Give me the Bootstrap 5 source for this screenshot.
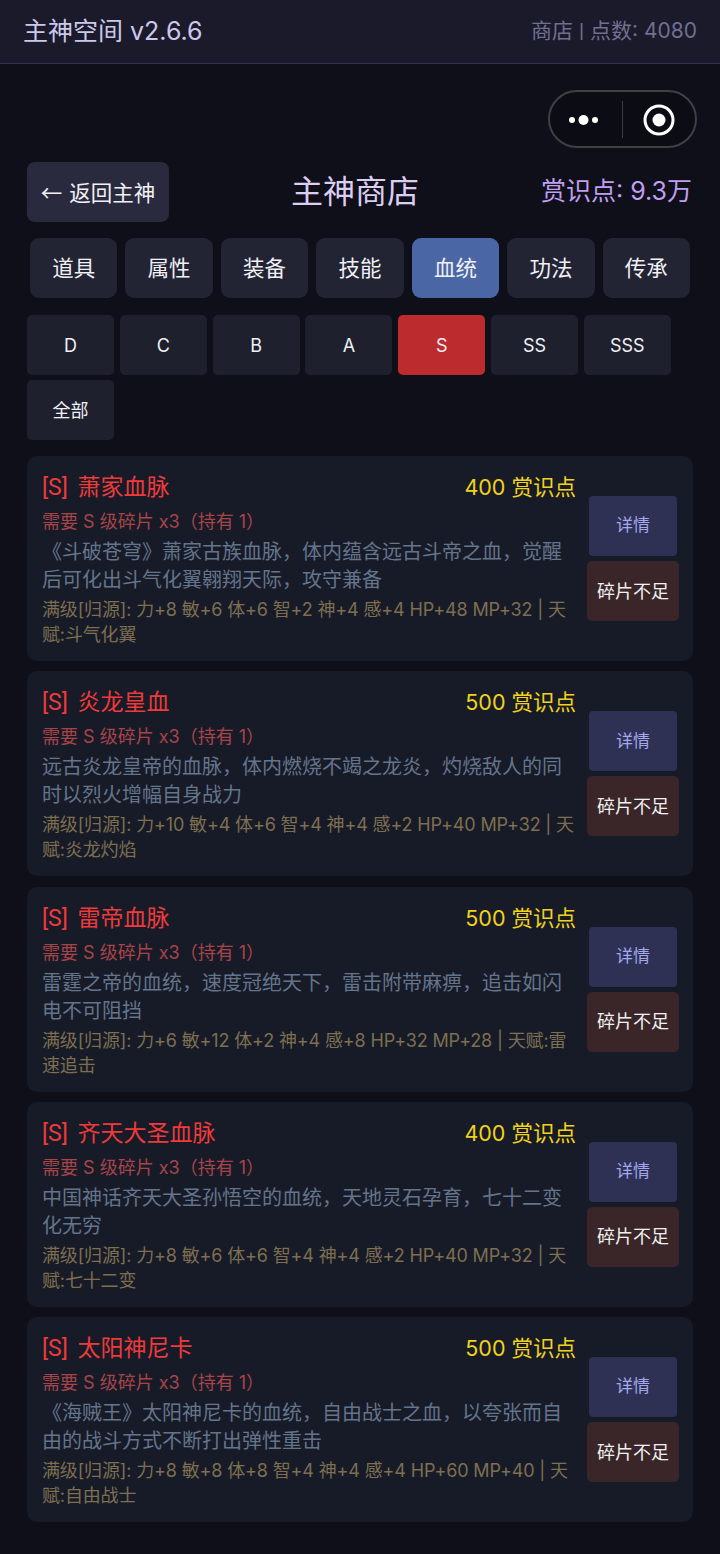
<!DOCTYPE html>
<html lang="zh-CN">
  <head>
    <meta charset="UTF-8" />
    <meta name="viewport" content="width=device-width, initial-scale=1.0" />
    <title>主神商店</title>
    <link href="https://cdn.jsdelivr.net/npm/bootstrap@5.3.0/dist/css/bootstrap.min.css" rel="stylesheet" />
    <style>
      body {
        background-color: #0f0f1a;
        font-family: "Inter", "Noto Sans CJK SC", sans-serif;
        min-height: 1554px;
        overflow: hidden;
      }
      .top-strip {
        height: 64px;
        background-color: #1a1a2a;
        border-bottom: 1px solid #33334f;
        padding: 0 23px;
      }
      .top-name { color: #ccc8ec; font-size: 25px; }
      .top-info { color: #6f6f8f; font-size: 21px; }
      .thin-bar { font-family: "Roboto", sans-serif; }
      .capsule {
        position: absolute;
        top: 90px;
        left: 548px;
        width: 149px;
        height: 58px;
        border: 2px solid #3f3f44;
        border-radius: 29px;
        background-color: #0c0c14;
      }
      .capsule-line { position: absolute; left: 72px; top: 9px; width: 1px; height: 37px; background: #3c3c42; }
      .capsule svg { position: absolute; }
      .shop-wrap { padding: 98px 27px 0; }
      .shop-head { height: 60px; }
      .back-btn {
        width: 142px;
        height: 60px;
        background-color: #2a2a3e;
        color: #f0f0f5;
        border: 0;
        border-radius: 8px;
        font-family: "Noto Sans CJK SC", sans-serif;
        font-size: 21.5px;
        word-spacing: 2px;
        padding: 0;
      }
      .shop-title { color: #dccdf3; font-size: 32px; margin-left: 122px; }
      .shop-points { color: #c09ff0; font-size: 25px; margin-right: 1px; margin-left: auto; }
      .tab-row { gap: 8.2px; margin: 16px 3px 0; }
      .tab-btn, .grade-btn {
        height: 60px;
        border: 0;
        color: #f0f0f5;
        background-color: #222433;
        padding: 0;
      }
      .tab-btn { flex: 1 1 0; border-radius: 9px; font-size: 21.5px; }
      .tab-btn.is-on { background-color: #4a66a4; }
      .grade-row { gap: 5px 5.8px; margin-top: 17px; }
      .grade-btn { width: 87px; border-radius: 5px; font-size: 18px; background-color: #1f202e; }
      .grade-btn.is-on { background-color: #bc2b2e; }
      .item-list { gap: 10.3px; margin-top: 16px; }
      .item-box {
        height: 205px;
        background-color: #171b28;
        border-radius: 10px;
        padding: 0 14px 0 15px;
      }
      .item-main { width: 534px; padding-top: 15px; }
      .item-name {
        color: #ee3a3a;
        font-family: "Roboto", "Noto Sans CJK SC", sans-serif;
        font-size: 23px;
        line-height: 32px;
        word-spacing: 4px;
        margin-top: 1px;
      }
      .item-cost { color: #f2d21a; font-size: 21.5px; line-height: 32px; }
      .item-need { color: #a84448; font-size: 18px; line-height: 26px; margin-top: 5px; }
      .item-desc { color: #64748b; font-size: 20px; line-height: 28px; margin-top: 3px; }
      .item-stat { color: #7d6f50; font-size: 18px; line-height: 25px; letter-spacing: -0.15px; margin-top: 3px; }
      .item-side { width: 92px; margin-left: 11px; gap: 5px; margin-top: 40px; }
      .info-btn {
        width: 88px;
        height: 60px;
        background-color: #2e3154;
        color: #a5a8ee;
        border: 0;
        border-radius: 4px;
        font-size: 17px;
        padding: 0;
      }
      .short-btn {
        width: 92px;
        height: 60px;
        background-color: #3a2629;
        color: #f0f0f0;
        border: 0;
        border-radius: 5px;
        font-size: 18px;
        padding: 0;
      }
    </style>
  </head>
  <body class="position-relative">
    <!-- Top strip -->
    <div class="top-strip d-flex align-items-center justify-content-between">
      <span class="top-name">主神空间 v2.6.6</span>
      <span class="top-info">商店 <span class="thin-bar">|</span> 点数: 4080</span>
    </div>

    <!-- Mini program capsule -->
    <div class="capsule">
      <svg style="left: 18px; top: 18px" width="34" height="20" viewBox="0 0 34 20">
        <circle cx="4" cy="10" r="3" fill="#fff" />
        <circle cx="15.5" cy="10" r="5" fill="#fff" />
        <circle cx="27" cy="10" r="3" fill="#fff" />
      </svg>
      <div class="capsule-line"></div>
      <svg style="left: 92px; top: 11px" width="34" height="34" viewBox="0 0 34 34">
        <circle cx="17" cy="17" r="14" fill="none" stroke="#fff" stroke-width="3" />
        <circle cx="17" cy="17" r="6.5" fill="#fff" />
      </svg>
    </div>

    <div class="shop-wrap">
      <div class="shop-head d-flex align-items-center">
        <button class="back-btn" type="button">← 返回主神</button>
        <div class="shop-title">主神商店</div>
        <div class="shop-points">赏识点: 9.3万</div>
      </div>

      <!-- Category tabs -->
      <div class="tab-row d-flex">
        <button class="tab-btn" type="button">道具</button>
        <button class="tab-btn" type="button">属性</button>
        <button class="tab-btn" type="button">装备</button>
        <button class="tab-btn" type="button">技能</button>
        <button class="tab-btn is-on" type="button">血统</button>
        <button class="tab-btn" type="button">功法</button>
        <button class="tab-btn" type="button">传承</button>
      </div>

      <!-- Grade filter -->
      <div class="grade-row d-flex flex-wrap">
        <button class="grade-btn" type="button">D</button>
        <button class="grade-btn" type="button">C</button>
        <button class="grade-btn" type="button">B</button>
        <button class="grade-btn" type="button">A</button>
        <button class="grade-btn is-on" type="button">S</button>
        <button class="grade-btn" type="button">SS</button>
        <button class="grade-btn" type="button">SSS</button>
        <button class="grade-btn" type="button">全部</button>
      </div>

      <!-- Items -->
      <div class="item-list d-flex flex-column">
        <div class="item-box d-flex">
          <div class="item-main">
            <div class="d-flex justify-content-between">
              <span class="item-name">[S] 萧家血脉</span>
              <span class="item-cost">400 赏识点</span>
            </div>
            <div class="item-need">需要 S 级碎片 x3（持有 1）</div>
            <div class="item-desc">《斗破苍穹》萧家古族血脉，体内蕴含远古斗帝之血，觉醒后可化出斗气化翼翱翔天际，攻守兼备</div>
            <div class="item-stat">满级[归源]: 力+8 敏+6 体+6 智+2 神+4 感+4 HP+48 MP+32 | 天赋:斗气化翼</div>
          </div>
          <div class="item-side d-flex flex-column align-items-center">
            <button class="info-btn" type="button">详情</button>
            <button class="short-btn" type="button">碎片不足</button>
          </div>
        </div>

        <div class="item-box d-flex">
          <div class="item-main">
            <div class="d-flex justify-content-between">
              <span class="item-name">[S] 炎龙皇血</span>
              <span class="item-cost">500 赏识点</span>
            </div>
            <div class="item-need">需要 S 级碎片 x3（持有 1）</div>
            <div class="item-desc">远古炎龙皇帝的血脉，体内燃烧不竭之龙炎，灼烧敌人的同时以烈火增幅自身战力</div>
            <div class="item-stat">满级[归源]: 力+10 敏+4 体+6 智+4 神+4 感+2 HP+40 MP+32 | 天赋:炎龙灼焰</div>
          </div>
          <div class="item-side d-flex flex-column align-items-center">
            <button class="info-btn" type="button">详情</button>
            <button class="short-btn" type="button">碎片不足</button>
          </div>
        </div>

        <div class="item-box d-flex">
          <div class="item-main">
            <div class="d-flex justify-content-between">
              <span class="item-name">[S] 雷帝血脉</span>
              <span class="item-cost">500 赏识点</span>
            </div>
            <div class="item-need">需要 S 级碎片 x3（持有 1）</div>
            <div class="item-desc">雷霆之帝的血统，速度冠绝天下，雷击附带麻痹，追击如闪电不可阻挡</div>
            <div class="item-stat">满级[归源]: 力+6 敏+12 体+2 神+4 感+8 HP+32 MP+28 | 天赋:雷速追击</div>
          </div>
          <div class="item-side d-flex flex-column align-items-center">
            <button class="info-btn" type="button">详情</button>
            <button class="short-btn" type="button">碎片不足</button>
          </div>
        </div>

        <div class="item-box d-flex">
          <div class="item-main">
            <div class="d-flex justify-content-between">
              <span class="item-name">[S] 齐天大圣血脉</span>
              <span class="item-cost">400 赏识点</span>
            </div>
            <div class="item-need">需要 S 级碎片 x3（持有 1）</div>
            <div class="item-desc">中国神话齐天大圣孙悟空的血统，天地灵石孕育，七十二变化无穷</div>
            <div class="item-stat">满级[归源]: 力+8 敏+6 体+6 智+4 神+4 感+2 HP+40 MP+32 | 天赋:七十二变</div>
          </div>
          <div class="item-side d-flex flex-column align-items-center">
            <button class="info-btn" type="button">详情</button>
            <button class="short-btn" type="button">碎片不足</button>
          </div>
        </div>

        <div class="item-box d-flex">
          <div class="item-main">
            <div class="d-flex justify-content-between">
              <span class="item-name">[S] 太阳神尼卡</span>
              <span class="item-cost">500 赏识点</span>
            </div>
            <div class="item-need">需要 S 级碎片 x3（持有 1）</div>
            <div class="item-desc">《海贼王》太阳神尼卡的血统，自由战士之血，以夸张而自由的战斗方式不断打出弹性重击</div>
            <div class="item-stat">满级[归源]: 力+8 敏+8 体+8 智+4 神+4 感+4 HP+60 MP+40 | 天赋:自由战士</div>
          </div>
          <div class="item-side d-flex flex-column align-items-center">
            <button class="info-btn" type="button">详情</button>
            <button class="short-btn" type="button">碎片不足</button>
          </div>
        </div>
      </div>
    </div>

    <script src="https://cdn.jsdelivr.net/npm/bootstrap@5.3.0/dist/js/bootstrap.bundle.min.js"></script>
  </body>
</html>
